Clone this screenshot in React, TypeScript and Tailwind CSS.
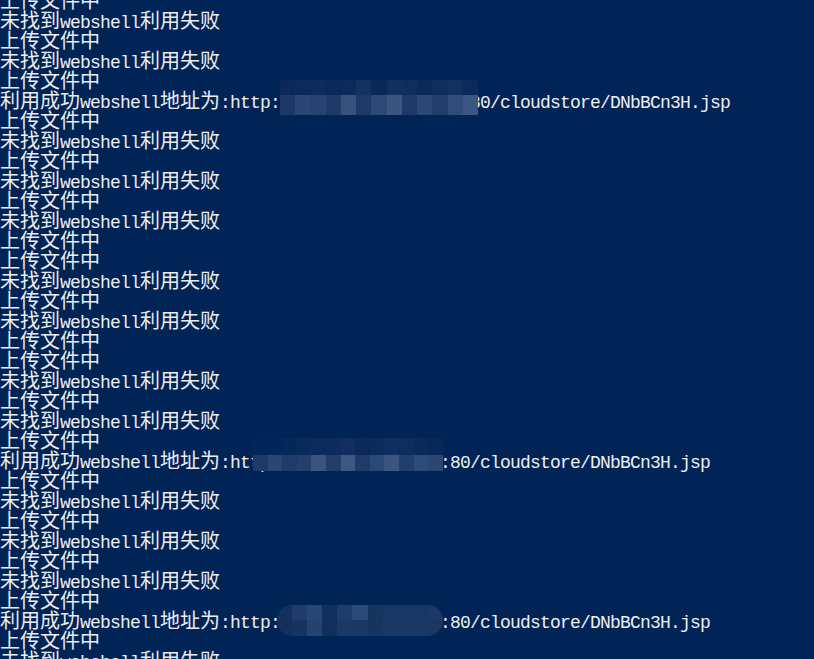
import React from "react";

const UP = "上传文件中";
const FAIL = "未找到webshell利用失败";

type Tile = string[][];

interface Blur {
  left: number;
  top: number;
  width: number;
  rows: number[];
  colors: Tile;
  round?: boolean;
}

interface Line {
  text: string;
  blur?: Blur;
}

// mosaic colours taken from the screenshot, top row then bottom row
const blurA: Blur = {
  left: 280,
  top: -10,
  width: 198,
  rows: [15, 20],
  colors: [
    ["#0b2858", "#0d2a5a", "#0e2b5b", "#0c2959", "#0d2a5a", "#15325f", "#0a2757", "#122f5d", "#102d5c", "#0c2959", "#0f2c5b", "#13305e", "#0d2a5a"],
    ["#1b3866", "#2a4673", "#27436f", "#1e3b68", "#37527c", "#1d3967", "#2d4a76", "#3a5580", "#1e3a68", "#2b4774", "#213e6b", "#304c78", "#3a5681"],
  ],
};

const blurB: Blur = {
  left: 253,
  top: -12,
  width: 190,
  rows: [17, 16],
  colors: [
    ["#03265a", "#03265a", "#062858", "#0a2a5a", "#0b2b5b", "#0c2c5c", "#102f5e", "#0a2a5a", "#0b2b5b", "#0e2e5d", "#0d2d5c", "#0a2a5a", "#08285a"],
    ["#1d3a68", "#2a4673", "#1e3b69", "#233f6c", "#3a5580", "#223e6b", "#3d5882", "#1f3c69", "#2c4874", "#3a5580", "#223e6b", "#2f4b77", "#2a4673"],
  ],
};

const blurC: Blur = {
  left: 277,
  top: -5,
  width: 166,
  rows: [15, 16],
  round: true,
  colors: [
    ["#13305f", "#203c69", "#2a4672", "#112e5c", "#1f3b68", "#2c4874", "#17345f", "#1a3763", "#1b3864", "#1a3763", "#1c3965"],
    ["#122f5d", "#17335f", "#26426f", "#112e5c", "#1c3865", "#1a3662", "#17345f", "#1b3864", "#1a3763", "#1b3864", "#1a3763"],
  ],
};

const lines: Line[] = [
  { text: UP },
  { text: FAIL },
  { text: UP },
  { text: FAIL },
  { text: UP },
  { text: "利用成功webshell地址为:http://192.168.10.101:8080/cloudstore/DNbBCn3H.jsp", blur: blurA },
  { text: UP },
  { text: FAIL },
  { text: UP },
  { text: FAIL },
  { text: UP },
  { text: FAIL },
  { text: UP },
  { text: UP },
  { text: FAIL },
  { text: UP },
  { text: FAIL },
  { text: UP },
  { text: UP },
  { text: FAIL },
  { text: UP },
  { text: FAIL },
  { text: UP },
  { text: "利用成功webshell地址为:http://192.168.100.10:80/cloudstore/DNbBCn3H.jsp", blur: blurB },
  { text: UP },
  { text: FAIL },
  { text: UP },
  { text: FAIL },
  { text: UP },
  { text: FAIL },
  { text: UP },
  { text: "利用成功webshell地址为:http://10.100.100.100:80/cloudstore/DNbBCn3H.jsp", blur: blurC },
  { text: UP },
  { text: FAIL },
];

const CJK = /[\u3000-\u9fff\uff00-\uffef]/;

// split into cjk / latin runs so latin stays half width
function runs(text: string) {
  const out: { s: string; cjk: boolean }[] = [];
  for (const ch of text) {
    const c = CJK.test(ch);
    const last = out[out.length - 1];
    if (last && last.cjk === c) last.s += ch;
    else out.push({ s: ch, cjk: c });
  }
  return out;
}

function Mosaic({ b }: { b: Blur }) {
  const total = b.rows.reduce((a, n) => a + n, 0);
  return (
    <div
      className={`absolute flex flex-col overflow-hidden ${b.round ? "rounded-[15px]" : ""}`}
      style={{ left: b.left, top: b.top, width: b.width, height: total }}
    >
      {b.rows.map((h, r) => (
        <div key={r} className="flex" style={{ height: h }}>
          {b.colors[r].map((c, i) => (
            <div key={i} className="flex-1" style={{ background: c }} />
          ))}
        </div>
      ))}
    </div>
  );
}

export default function App() {
  return (
    <div className="w-[814px] h-[659px] overflow-hidden bg-[#012456] text-[#eeedf0]">
      <div className="-mt-[10px] flex flex-col">
        {lines.map((line, i) => (
          <div key={i} className="relative h-5 leading-5 whitespace-pre">
            {runs(line.text).map((r, j) =>
              r.cjk ? (
                <span key={j} className="text-[20px] leading-5 font-['Noto_Sans_CJK_SC',sans-serif]">
                  {r.s}
                </span>
              ) : (
                <span key={j} className="text-[18px] tracking-[-0.8px] leading-5 font-['Liberation_Mono',monospace]">
                  {r.s}
                </span>
              )
            )}
            {line.blur && <Mosaic b={line.blur} />}
          </div>
        ))}
      </div>
    </div>
  );
}
